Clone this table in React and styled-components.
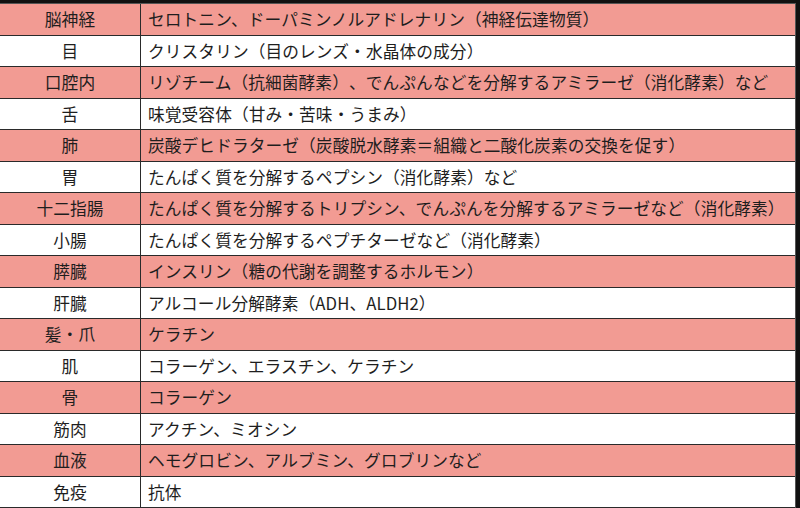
import React from "react";
import styled, { createGlobalStyle } from "styled-components";

const GlobalStyle = createGlobalStyle`
  html, body {
    margin: 0;
    padding: 0;
    background: #111111;
  }
  body {
    font-family: "Noto Sans CJK JP", "Noto Sans", sans-serif;
  }
`;

const Frame = styled.div`
  width: 800px;
  height: 508px;
  box-sizing: border-box;
  padding: 3px 4px 0 0;
  background: #111111;
  overflow: hidden;
`;

const Table = styled.div`
  display: grid;
  grid-template-columns: 141px 1fr;
  grid-auto-rows: 31.5px;
  background: #ffffff;
  border-top: 1px solid #555555;
  border-right: 1px solid #555555;
`;

const Cell = styled.div`
  display: flex;
  align-items: center;
  box-sizing: border-box;
  border-bottom: 1px solid #2a2a2a;
  background: ${(p) => (p.$pink ? "#f29b93" : "#ffffff")};
  color: #1e1e1e;
  font-size: 16.7px;
  letter-spacing: 0.1px;
  text-spacing-trim: space-all;
  white-space: nowrap;
`;

const Organ = styled(Cell)`
  justify-content: center;
  border-right: 1px solid #2a2a2a;
`;

const Detail = styled(Cell)`
  padding-left: 7px;
`;

const rows = [
  ["脳神経", "セロトニン、ドーパミンノルアドレナリン（神経伝達物質）"],
  ["目", "クリスタリン（目のレンズ・水晶体の成分）"],
  ["口腔内", "リゾチーム（抗細菌酵素）、でんぷんなどを分解するアミラーゼ（消化酵素）など"],
  ["舌", "味覚受容体（甘み・苦味・うまみ）"],
  ["肺", "炭酸デヒドラターゼ（炭酸脱水酵素＝組織と二酸化炭素の交換を促す）"],
  ["胃", "たんぱく質を分解するペプシン（消化酵素）など"],
  ["十二指腸", "たんぱく質を分解するトリプシン、でんぷんを分解するアミラーゼなど（消化酵素）"],
  ["小腸", "たんぱく質を分解するペプチターゼなど（消化酵素）"],
  ["膵臓", "インスリン（糖の代謝を調整するホルモン）"],
  ["肝臓", "アルコール分解酵素（ADH、ALDH2）"],
  ["髪・爪", "ケラチン"],
  ["肌", "コラーゲン、エラスチン、ケラチン"],
  ["骨", "コラーゲン"],
  ["筋肉", "アクチン、ミオシン"],
  ["血液", "ヘモグロビン、アルブミン、グロブリンなど"],
  ["免疫", "抗体"],
];

export default function App() {
  return (
    <>
      <GlobalStyle />
      <Frame>
        <Table>
          {rows.map(([organ, detail], i) => (
            <React.Fragment key={organ}>
              <Organ $pink={i % 2 === 0}>{organ}</Organ>
              <Detail $pink={i % 2 === 0}>{detail}</Detail>
            </React.Fragment>
          ))}
        </Table>
      </Frame>
    </>
  );
}
